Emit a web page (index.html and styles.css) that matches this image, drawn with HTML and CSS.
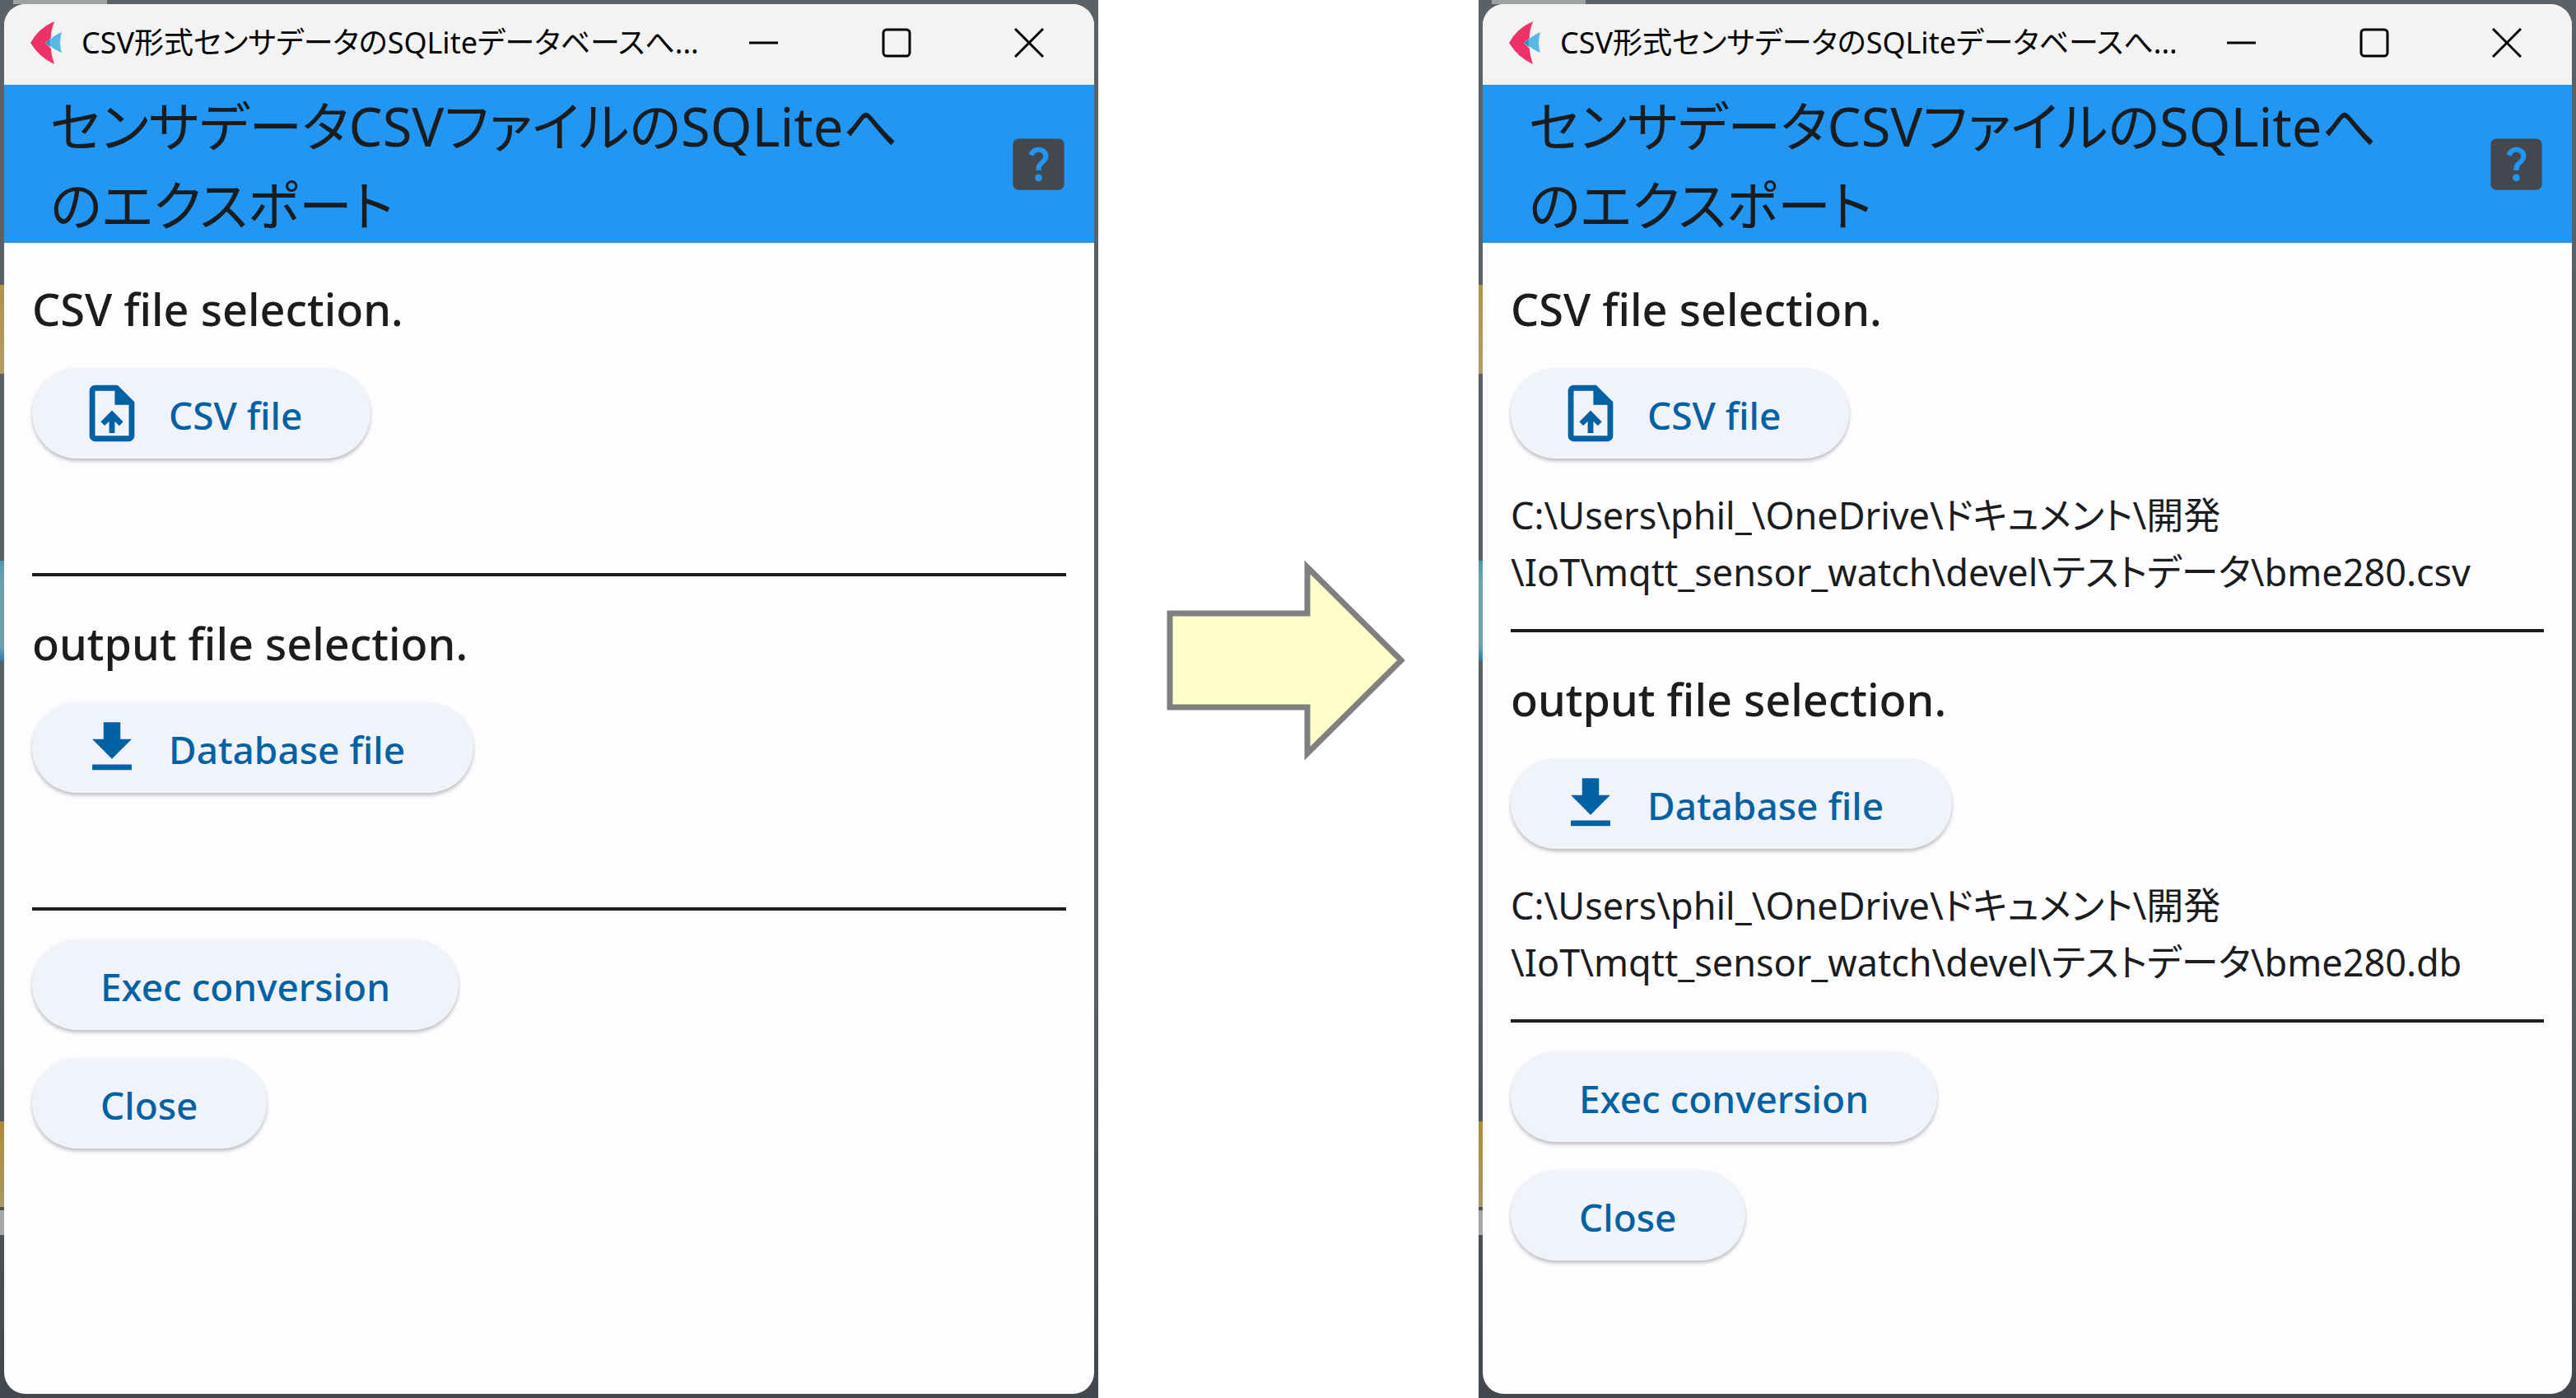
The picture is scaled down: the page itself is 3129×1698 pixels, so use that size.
FILE: index.html
```html
<!DOCTYPE html>
<html lang="ja">
<head>
<meta charset="utf-8">
<meta name="viewport" content="width=device-width, initial-scale=1">
<title>CSV形式センサデータのSQLiteデータベースへのエクスポート</title>
<link rel="stylesheet" href="styles.css">
</head>
<body>
<svg class="sprite" aria-hidden="true">
  <symbol id="logo" viewBox="0 0 38 52">
    <path fill="#59b9e6" d="M38 13Q34 26 38 38Q28 34 19 26Q28 17 38 13Z"/>
    <path fill="#ee3167" d="M29 0Q24 14 25 20L18 26L25 33Q25 40 29 52Q10 43 0 26Q10 8 29 0Z"/>
    <path fill="#3a8bc8" d="M24 21Q23 26 24 31L18 26Z"/>
  </symbol>
  <symbol id="minimize" viewBox="0 0 36 36"><path d="M0 18H35" fill="none" stroke="#000" stroke-width="3"/></symbol>
  <symbol id="maximize" viewBox="0 0 36 36"><rect x="2" y="2" width="32" height="32" rx="4" fill="none" stroke="#000" stroke-width="3"/></symbol>
  <symbol id="close" viewBox="0 0 36 36"><path d="M1 1L35 35M35 1L1 35" fill="none" stroke="#000" stroke-width="3"/></symbol>
  <symbol id="help" viewBox="0 0 24 24"><path d="M19 3H5c-1.100 0-2 .9-2 2v14c0 1.100.9 2 2 2h14c1.100 0 2-.9 2-2V5c0-1.100-.9-2-2-2zm-6.990 15c-.7 0-1.260-.56-1.260-1.260 0-.71.56-1.250 1.260-1.250.71 0 1.250.54 1.250 1.250-.01.69-.54 1.260-1.250 1.260zm3.010-7.400c-.76 1.110-1.480 1.460-1.870 2.170-.16.29-.22.48-.22 1.410h-1.820c0-.49-.08-1.290.31-1.980.49-.87 1.420-1.390 1.960-2.160.57-.81.25-2.330-1.370-2.330-1.060 0-1.580.8-1.800 1.480l-1.650-.7C9.010 7.150 10.220 6 11.990 6c1.480 0 2.490.67 3.010 1.520.44.72.7 2.070.02 3.080z"/></symbol>
  <symbol id="upload" viewBox="0 0 24 24"><path d="M14 2H6c-1.100 0-1.990.9-1.990 2L4 20c0 1.100.89 2 1.990 2H18c1.100 0 2-.9 2-2V8l-6-6zm4 18H6V4h7v5h5v11zM8 15.010l1.410 1.410L11 14.840V19h2v-4.160l1.590 1.590L16 15.010 12.010 11 8 15.010z"/></symbol>
  <symbol id="save" viewBox="0 0 24 24"><path d="M19 9h-4V3H9v6H5l7 7 7-7zM5 18v2h14v-2H5z"/></symbol>
</svg>
<main class="stage">
  <section class="frame">
    <div class="window">
      <header class="titlebar">
        <svg class="logo"><use href="#logo"/></svg>
        <span class="caption">CSV形式センサデータのSQLiteデータベースへ...</span>
        <div class="controls">
          <button type="button" aria-label="Minimize"><svg><use href="#minimize"/></svg></button>
          <button type="button" aria-label="Maximize"><svg><use href="#maximize"/></svg></button>
          <button type="button" aria-label="Close window"><svg><use href="#close"/></svg></button>
        </div>
      </header>
      <div class="appbar">
        <h1>センサデータCSVファイルのSQLiteへ<br>のエクスポート</h1>
        <button class="help" type="button" aria-label="Help"><svg><use href="#help"/></svg></button>
      </div>
      <div class="content">
        <h2>CSV file selection.</h2>
        <button class="btn btn-icon" type="button"><svg><use href="#upload"/></svg><span>CSV file</span></button>
        <p class="path"></p>
        <hr>
        <h2>output file selection.</h2>
        <button class="btn btn-icon" type="button"><svg><use href="#save"/></svg><span>Database file</span></button>
        <p class="path"></p>
        <hr>
        <button class="btn" type="button"><span>Exec conversion</span></button>
        <button class="btn" type="button"><span>Close</span></button>
      </div>
    </div>
  </section>
  <div class="between">
    <svg class="arrow" viewBox="0 0 290 246" aria-hidden="true"><path d="M4 66H171V10L285 123L171 236V180H4Z"/></svg>
  </div>
  <section class="frame">
    <div class="window">
      <header class="titlebar">
        <svg class="logo"><use href="#logo"/></svg>
        <span class="caption">CSV形式センサデータのSQLiteデータベースへ...</span>
        <div class="controls">
          <button type="button" aria-label="Minimize"><svg><use href="#minimize"/></svg></button>
          <button type="button" aria-label="Maximize"><svg><use href="#maximize"/></svg></button>
          <button type="button" aria-label="Close window"><svg><use href="#close"/></svg></button>
        </div>
      </header>
      <div class="appbar">
        <h1>センサデータCSVファイルのSQLiteへ<br>のエクスポート</h1>
        <button class="help" type="button" aria-label="Help"><svg><use href="#help"/></svg></button>
      </div>
      <div class="content">
        <h2>CSV file selection.</h2>
        <button class="btn btn-icon" type="button"><svg><use href="#upload"/></svg><span>CSV file</span></button>
        <p class="path">C:\Users\phil_\OneDrive\ドキュメント\開発<br>\IoT\mqtt_sensor_watch\devel\テストデータ\bme280.csv</p>
        <hr>
        <h2>output file selection.</h2>
        <button class="btn btn-icon" type="button"><svg><use href="#save"/></svg><span>Database file</span></button>
        <p class="path">C:\Users\phil_\OneDrive\ドキュメント\開発<br>\IoT\mqtt_sensor_watch\devel\テストデータ\bme280.db</p>
        <hr>
        <button class="btn" type="button"><span>Exec conversion</span></button>
        <button class="btn" type="button"><span>Close</span></button>
      </div>
    </div>
  </section>
</main>
</body>
</html>
```
FILE: styles.css
```css
* { box-sizing: border-box; }

body {
  margin: 0;
  background: #fff;
  color: #1a1c1e;
  font-family: "Noto Sans", "Noto Sans CJK JP", sans-serif;
  font-feature-settings: "palt";
}

h1, h2, p { margin: 0; font-weight: 400; }

button {
  border: 0;
  padding: 0;
  background: none;
  color: inherit;
  font: inherit;
  cursor: pointer;
}

.sprite { display: none; }

.stage {
  display: grid;
  grid-template-columns: 1334fr 462fr 1333fr;
  min-height: 100vh;
}

/* Strip of desktop that shows round each window */
.frame {
  display: flex;
  min-width: 0;
  padding: 5px;
  background:
    linear-gradient(#9da3a1, #9da3a1) 16px 0 / 114px 5px no-repeat,
    linear-gradient(#b3924a, #b39c68) 0 346px / 5px 108px no-repeat,
    linear-gradient(#4b9bb0, #6ca0b0 20%, #6ca0b0 85%, #307aa8) 0 681px / 5px 122px no-repeat,
    linear-gradient(#b08a35, #a8986a) 0 1362px / 5px 104px no-repeat,
    linear-gradient(#a5a9a5, #a5a9a5) 0 1470px / 5px 30px no-repeat,
    linear-gradient(#5b6267, #596065 70%, #42474e);
}

.window {
  flex: 1;
  min-width: 0;
  border-radius: 26px;
  overflow: hidden;
  background: #fdfcff;
}

.titlebar {
  display: flex;
  align-items: center;
  height: 98px;
  padding: 0 61px 4px 32px;
  background: #f3f3f3;
}

.logo { flex: none; width: 38px; height: 52px; margin-right: 24px; }

.caption {
  flex: 1;
  color: #000;
  font-size: 36px;
  line-height: 60px;
  white-space: nowrap;
}

.controls { display: flex; gap: 125px; }
.controls button, .controls svg { display: block; width: 36px; height: 36px; }

.appbar {
  display: flex;
  align-items: center;
  justify-content: space-between;
  height: 192px;
  padding: 0 26px 0 56px;
  background: #2196f3;
}

.appbar h1 { padding-top: 4px; font-size: 65px; line-height: 96px; white-space: nowrap; }

.help svg { display: block; width: 83px; height: 83px; fill: #43474e; }

.content {
  display: flex;
  flex-direction: column;
  align-items: flex-start;
  gap: 34px;
  padding: 34px;
}

.content h2 { padding-top: 8px; font-size: 54px; font-weight: 500; line-height: 76px; }

.btn {
  display: flex;
  align-items: center;
  height: 110px;
  padding: 0 83px;
  border-radius: 55px;
  background: #f0f3fa;
  box-shadow: 0 3px 4px rgba(0, 0, 0, .25);
  color: #0061a4;
  font-size: 46px;
  font-weight: 500;
}

.btn span { padding-top: 3px; }

.btn-icon { gap: 28px; padding-left: 56px; }
.btn-icon svg { width: 82px; height: 82px; fill: #0061a4; }

.path { min-height: 70px; font-size: 45px; line-height: 69px; white-space: nowrap; }

.content hr {
  align-self: stretch;
  height: 4px;
  margin: 1px 0;
  border: 0;
  background: #1a1c1e;
}

.between {
  display: flex;
  align-items: center;
  justify-content: center;
  padding: 0 6px 95px 0;
}

.arrow { width: 290px; height: 246px; }
.arrow path { fill: #ffffcc; stroke: #808080; stroke-width: 7; }
```
